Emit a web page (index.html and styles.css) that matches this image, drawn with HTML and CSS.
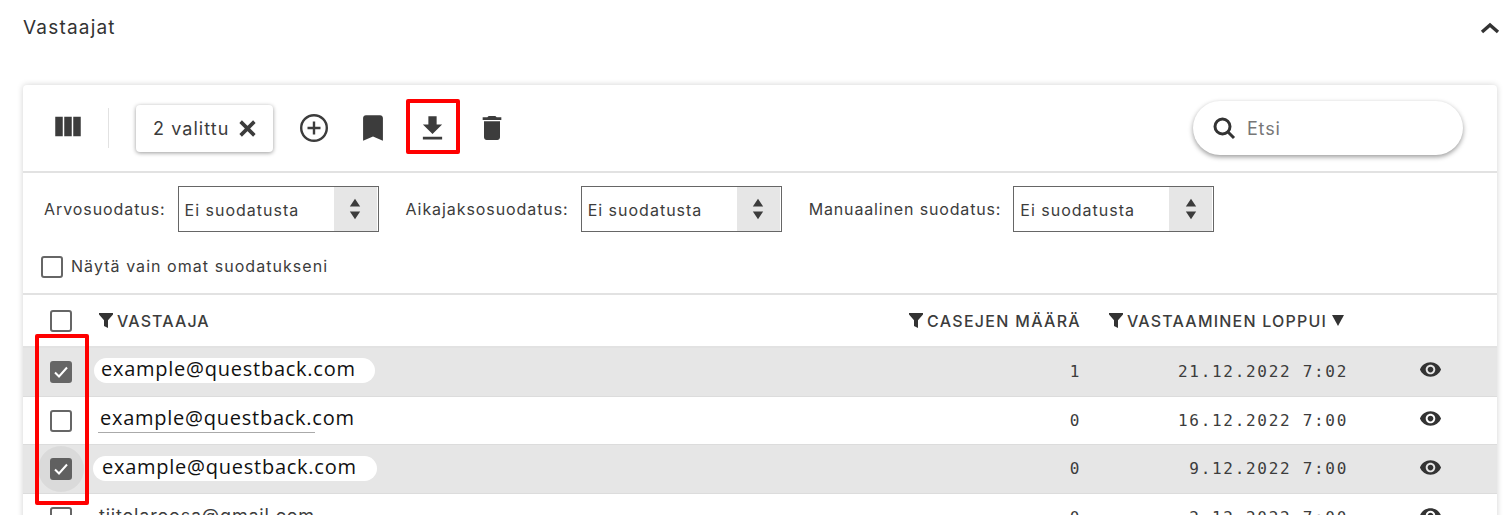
FILE: index.html
```html
<!DOCTYPE html>
<html lang="en">
<head>
    <meta charset="UTF-8">
    <title>Vastaajat</title>
    <link rel="stylesheet" href="styles.css">
</head>
<body>
    <svg class="sprites" width="0" height="0">
        <symbol id="i-filter" viewBox="0 0 14 15"><path d="M0 0h14v1.6L9 7.2V15L5 13V7.2L0 1.6z"/></symbol>
        <symbol id="i-eye" viewBox="0 0 24 24"><path d="M12 4.5C7 4.5 2.73 7.61 1 12c1.73 4.39 6 7.5 11 7.5s9.27-3.11 11-7.5c-1.73-4.39-6-7.5-11-7.5zM12 17c-2.76 0-5-2.24-5-5s2.24-5 5-5 5 2.24 5 5-2.24 5-5 5zm0-8c-1.66 0-3 1.34-3 3s1.34 3 3 3 3-1.34 3-3-1.34-3-3-3z"/></symbol>
        <symbol id="i-check" viewBox="0 0 22 22"><path d="M5 11.5l4 4 8-9" fill="none" stroke="#fff" stroke-width="2"/></symbol>
        <symbol id="i-updown" viewBox="0 0 14 24"><path d="M7 0l6 9H1zM1 15h12l-6 9z"/></symbol>
    </svg>

    <header class="section-head">
        <h2>Vastaajat</h2>
        <svg class="chevron" width="20" height="12" viewBox="0 0 20 12"><path d="M2 10l8-7 8 7" fill="none" stroke="#333" stroke-width="3.4"/></svg>
    </header>

    <div class="panel">
        <div class="toolbar">
            <svg class="tool tool-columns" width="30" height="30" viewBox="2.5 2.5 20 20"><path d="M10 18h5V5h-5v13zm-6 0h5V5H4v13zM16 5v13h5V5h-5z"/></svg>
            <span class="divider"></span>
            <div class="chip">
                <span>2 valittu</span>
                <svg width="19" height="19" viewBox="0 0 18 18"><path d="M2.5 2.5l13 13M15.500 2.500l-13 13" stroke="#3c3c3c" stroke-width="3.4" fill="none"/></svg>
            </div>
            <svg class="tool tool-add" width="34" height="34" viewBox="0 0 34 34"><circle cx="17" cy="17" r="12.800" fill="none" stroke="#3c3c3c" stroke-width="2.400"/><path d="M17 10.500v13M10.500 17h13" stroke="#3c3c3c" stroke-width="2.400"/></svg>
            <svg class="tool tool-bookmark" width="34" height="34" viewBox="0 0 24 24"><path d="M17 3H7c-1.100 0-2 .9-2 2v16l7-3 7 3V5c0-1.100-.9-2-2-2z"/></svg>
            <svg class="tool tool-download" width="33" height="33" viewBox="0 0 24 24"><path d="M19 9h-4V3H9v6H5l7 7 7-7zM5 18v2h14v-2H5z"/></svg>
            <svg class="tool tool-trash" width="32" height="32" viewBox="0 0 24 24"><path d="M6 19c0 1.100.9 2 2 2h8c1.100 0 2-.9 2-2V7H6v12zM19 4h-3.500l-1-1h-5l-1 1H5v2h14V4z"/></svg>
            <div class="search">
                <svg width="24" height="24" viewBox="0 0 24 24"><circle cx="10.500" cy="10.500" r="7.500" fill="none" stroke="#333" stroke-width="3"/><path d="M16 16l6 6" stroke="#333" stroke-width="3"/></svg>
                <span>Etsi</span>
            </div>
        </div>

        <div class="filters">
            <div class="filter-row">
                <label>Arvosuodatus:</label>
                <div class="select"><span>Ei suodatusta</span><i class="select-arrows"><svg width="12" height="24"><use href="#i-updown"/></svg></i></div>
                <label>Aikajaksosuodatus:</label>
                <div class="select"><span>Ei suodatusta</span><i class="select-arrows"><svg width="12" height="24"><use href="#i-updown"/></svg></i></div>
                <label class="label-tight">Manuaalinen suodatus:</label>
                <div class="select"><span>Ei suodatusta</span><i class="select-arrows"><svg width="12" height="24"><use href="#i-updown"/></svg></i></div>
            </div>
            <div class="own-filter">
                <span class="box"></span>
                <span class="own-text">Näytä vain omat suodatukseni</span>
            </div>
        </div>

        <div class="row row-head">
            <div class="cell-check"><span class="box"></span></div>
            <div class="cell-name"><svg class="funnel"><use href="#i-filter"/></svg>VASTAAJA</div>
            <div class="cell-count"><svg class="funnel"><use href="#i-filter"/></svg>CASEJEN MÄÄRÄ</div>
            <div class="cell-date"><svg class="funnel"><use href="#i-filter"/></svg>VASTAAMINEN LOPPUI<span class="sort"></span></div>
            <div class="cell-eye"></div>
        </div>

        <div class="row row-shaded">
            <div class="cell-check"><span class="box checked"><svg width="22" height="22"><use href="#i-check"/></svg></span></div>
            <div class="cell-name"><span class="mail pill">example@questback.com</span></div>
            <div class="cell-count">1</div>
            <div class="cell-date">21.12.2022 7:02</div>
            <div class="cell-eye"><svg width="23" height="23"><use href="#i-eye"/></svg></div>
        </div>
        <div class="row">
            <div class="cell-check"><span class="box"></span></div>
            <div class="cell-name"><span class="mail underlined">example@questback.com</span></div>
            <div class="cell-count">0</div>
            <div class="cell-date">16.12.2022 7:00</div>
            <div class="cell-eye"><svg width="23" height="23"><use href="#i-eye"/></svg></div>
        </div>
        <div class="row row-shaded">
            <div class="cell-check"><span class="box checked focused"><svg width="22" height="22"><use href="#i-check"/></svg></span></div>
            <div class="cell-name"><span class="mail pill pill-wide">example@questback.com</span></div>
            <div class="cell-count">0</div>
            <div class="cell-date">9.12.2022 7:00</div>
            <div class="cell-eye"><svg width="23" height="23"><use href="#i-eye"/></svg></div>
        </div>
        <div class="row">
            <div class="cell-check"><span class="box"></span></div>
            <div class="cell-name"><span class="plain-mail">tiitolaroosa@gmail.com</span></div>
            <div class="cell-count">0</div>
            <div class="cell-date">2.12.2022 7:00</div>
            <div class="cell-eye"><svg width="23" height="23"><use href="#i-eye"/></svg></div>
        </div>
    </div>

    <div class="mark mark-download"></div>
    <div class="mark mark-checks"></div>
</body>
</html>
```

FILE: styles.css
```css
html, body {
    margin: 0;
    padding: 0;
    height: 515px;
    overflow: hidden;
}
body {
    position: relative;
    background-color: #fff;
    font-family: Inter, "Open Sans", sans-serif;
    color: #3c3c3c;
}
.sprites {
    position: absolute;
}
.section-head {
    display: flex;
    align-items: center;
    justify-content: space-between;
    height: 55px;
    padding: 0 8px 0 23px;
    margin-bottom: 30px;
}
h2 {
    margin: 0;
    font-size: 19px;
    font-weight: 400;
    letter-spacing: 1.2px;
    color: #333;
}
.panel {
    margin: 0 11px 0 23px;
    border-radius: 4px 4px 0 0;
    box-shadow: 0 0 6px rgba(0, 0, 0, 0.18);
    background-color: #fff;
}

/* toolbar */
.toolbar {
    display: flex;
    align-items: center;
    height: 86px;
    border-bottom: 2px solid #e2e2e2;
}
.tool {
    flex: none;
    fill: #3c3c3c;
}
.tool-columns {
    margin-left: 30px;
}
.divider {
    width: 1px;
    height: 40px;
    margin: 0 27px 0 25px;
    background-color: #e2e2e2;
}
.chip {
    display: flex;
    align-items: center;
    gap: 9px;
    width: 137px;
    height: 47px;
    box-sizing: border-box;
    padding-left: 17px;
    border-radius: 4px;
    font-size: 18px;
    letter-spacing: 1.05px;
    box-shadow: 0 1px 4px rgba(0, 0, 0, 0.4);
}
.tool-add {
    margin-left: 24px;
}
.tool-bookmark {
    margin-left: 25px;
}
.tool-download {
    margin-left: 26px;
}
.tool-trash {
    margin-left: 27px;
}
.search {
    display: flex;
    align-items: center;
    gap: 11px;
    width: 270px;
    height: 54px;
    box-sizing: border-box;
    margin-left: auto;
    margin-right: 34px;
    padding-left: 19px;
    border-radius: 27px;
    font-size: 18px;
    letter-spacing: 0.8px;
    color: #777;
    box-shadow: 0 2px 5px rgba(0, 0, 0, 0.4);
}

/* filters */
.filters {
    height: 122px;
    box-sizing: border-box;
    padding: 13px 0 0 21px;
    border-bottom: 2px solid #e2e2e2;
}
.filter-row {
    display: flex;
    align-items: center;
    font-size: 16px;
    letter-spacing: 0.92px;
}
.filter-row label {
    margin-right: 12px;
}
.filter-row .label-tight {
    letter-spacing: 0.85px;
}
.select {
    display: flex;
    align-items: center;
    justify-content: space-between;
    width: 201px;
    height: 46px;
    box-sizing: border-box;
    margin-right: 27px;
    padding-left: 6px;
    border: 1px solid #666;
    letter-spacing: 1px;
}
.select span {
    padding-top: 2px;
}
.select-arrows {
    display: flex;
    align-items: center;
    justify-content: center;
    width: 43px;
    height: 44px;
    margin-right: 1px;
    background-color: #e6e6e6;
}
.select-arrows svg {
    fill: #3c3c3c;
}
.own-filter {
    display: flex;
    align-items: center;
    gap: 8px;
    margin: 24px 0 0 -3px;
    font-size: 16px;
    letter-spacing: 1.05px;
}
.own-text {
    margin-top: -2px;
}
.box {
    display: block;
    position: relative;
    width: 18px;
    height: 18px;
    border: 2px solid #666;
    border-radius: 3px;
}
.box.checked {
    background-color: #666;
}
.box.checked svg {
    position: absolute;
    left: -2px;
    top: -2px;
}
.box.focused::before {
    content: "";
    position: absolute;
    left: -14px;
    top: -14px;
    width: 46px;
    height: 46px;
    border-radius: 50%;
    background-color: rgba(0, 0, 0, 0.05);
}

/* table */
.row {
    display: grid;
    grid-template-columns: 76px 1fr 190px 267px 149px;
    align-items: center;
    height: 47.7px;
    border-bottom: 1px solid #dcdcdc;
}
.row-head {
    height: 51px;
    font-size: 16px;
    letter-spacing: 1.1px;
    font-weight: 500;
    border-bottom: 2px solid #e2e2e2;
}
.row-shaded {
    background-color: #e6e6e6;
}
.cell-check {
    padding-left: 27px;
}
.cell-name {
    display: flex;
    align-items: center;
}
.cell-count, .cell-date {
    display: flex;
    align-items: center;
    justify-content: flex-end;
    font-family: "DejaVu Sans Mono", monospace;
    font-size: 16px;
    letter-spacing: 1.7px;
    margin-top: -1px;
}
.row-head .cell-count, .row-head .cell-date {
    font-family: Inter, "Open Sans", sans-serif;
    font-size: 16px;
    letter-spacing: 1.3px;
    margin-top: 0;
}
.row-head .cell-date {
    letter-spacing: 1.2px;
    padding-right: 4px;
}
.funnel {
    width: 14px;
    height: 15px;
    margin-right: 4px;
    fill: #333;
}
.sort {
    width: 0;
    height: 0;
    margin-left: 5px;
    border-left: 6px solid transparent;
    border-right: 6px solid transparent;
    border-top: 11px solid #333;
}
.cell-eye {
    padding-left: 71px;
    height: 23px;
    margin-top: -4px;
}
.cell-eye svg {
    display: block;
    fill: #333;
}
.mail {
    position: relative;
    font-family: "Open Sans", sans-serif;
    font-size: 20px;
    line-height: 21px;
    letter-spacing: 0.75px;
    color: #111;
}
.pill {
    margin-left: -5px;
    margin-top: -2px;
    padding: 0 19px 4px 7px;
    border-radius: 13px;
    background-color: #fff;
}
.pill-wide {
    margin-left: -6px;
    padding: 0 20px 4px 9px;
}
.underlined {
    margin-left: 1px;
    margin-top: -7px;
}
.underlined::after {
    content: "";
    position: absolute;
    left: -2px;
    top: 25px;
    width: 217px;
    height: 1px;
    background-color: #aaa;
}
.plain-mail {
    font-size: 18px;
    letter-spacing: 0.8px;
    margin-top: -4px;
}

/* red annotation frames */
.mark {
    position: absolute;
    box-sizing: border-box;
    border: 4px solid #f00;
    border-radius: 2px;
}
.mark-download {
    left: 406px;
    top: 99px;
    width: 54px;
    height: 55px;
}
.mark-checks {
    left: 35px;
    top: 334px;
    width: 54px;
    height: 171px;
}
```
